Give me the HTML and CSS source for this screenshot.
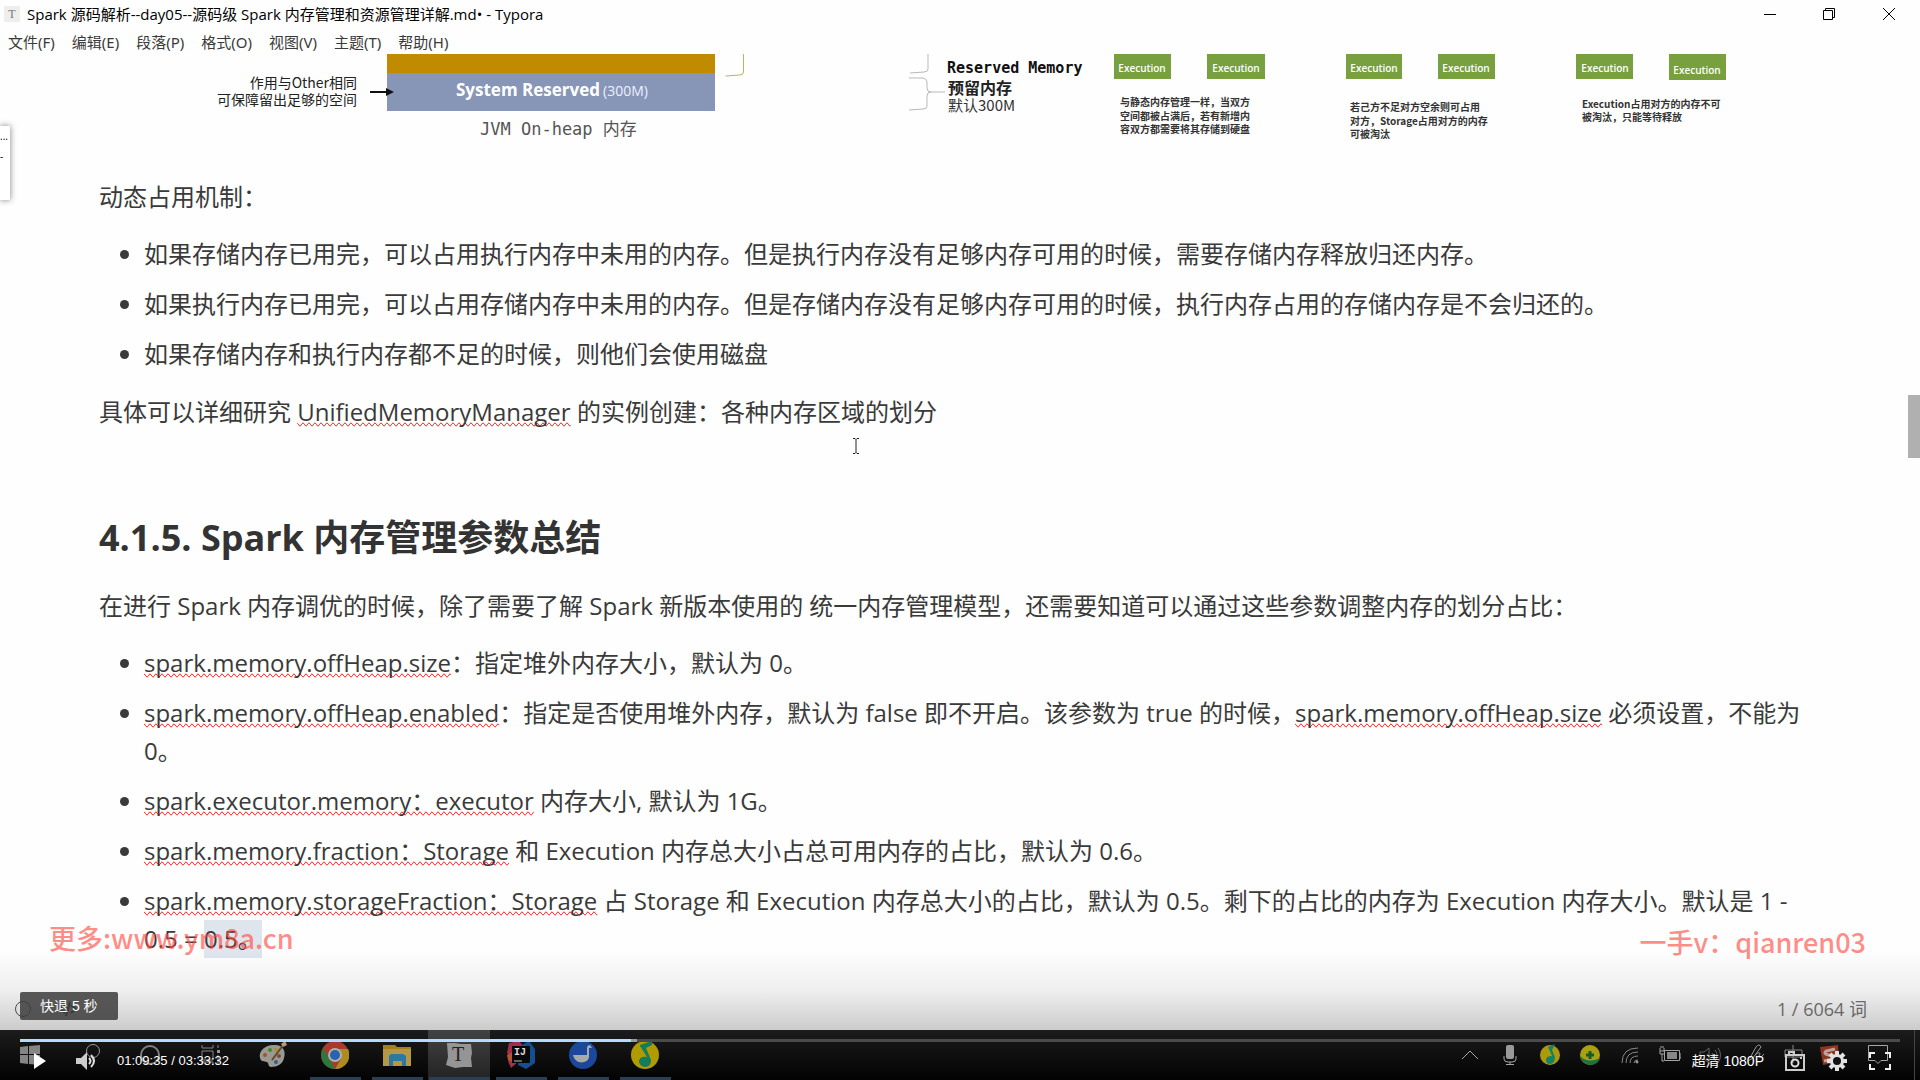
FILE: index.html
```html
<!DOCTYPE html>
<html lang="zh-CN">
<head>
  <meta charset="UTF-8">
  <meta name="viewport" content="width=device-width, initial-scale=1.0">
  <title>Spark 源码解析 - Typora</title>
  <link rel="stylesheet" href="styles.css">
</head>
<body>

  <!-- Title bar -->
  <div class="titlebar">
    <span class="app-icon">T</span>
    <span class="title">Spark 源码解析--day05--源码级 Spark 内存管理和资源管理详解.md• - Typora</span>
    <div class="window-buttons">
      <button aria-label="最小化"><svg width="12" height="12" viewBox="0 0 12 12"><path d="M0 6.5h12"/></svg></button>
      <button aria-label="还原"><svg width="12" height="12" viewBox="0 0 12 12"><path d="M.5 2.5h9v9h-9zM2.500 2.500v-2h9v9h-2"/></svg></button>
      <button aria-label="关闭"><svg width="12" height="12" viewBox="0 0 12 12"><path d="M0 0l12 12M12 0L0 12"/></svg></button>
    </div>
  </div>

  <!-- Menu -->
  <div class="menubar">
    <button>文件(F)</button>
    <button>编辑(E)</button>
    <button>段落(P)</button>
    <button>格式(O)</button>
    <button>视图(V)</button>
    <button>主题(T)</button>
    <button>帮助(H)</button>
  </div>

  <!-- Document -->
  <div class="content">
    <svg class="diagram" viewBox="99 54 1722 96">
      <text class="note" x="357" y="88" text-anchor="end">作用与Other相同</text>
      <text class="note" x="357" y="105" text-anchor="end">可保障留出足够的空间</text>
      <rect x="387" y="54" width="328" height="19" fill="#c18b00"/>
      <rect x="387" y="73" width="328" height="38" fill="#8796b7"/>
      <path d="M370 92h20" stroke="#111" stroke-width="2"/>
      <path d="M386 88l8 4-8 4z" fill="#111"/>
      <text class="reserved" x="456" y="96">System Reserved</text>
      <text class="size" x="603" y="96">(300M)</text>
      <text class="mono" x="480" y="135">JVM On-heap 内存</text>

      <path class="bracket gold" d="M743.500 54v18q0 3-4 3l-14 1"/>
      <path class="bracket" d="M928 54v15q0 3-4 3l-14 1"/>
      <path class="bracket" d="M909 78h14q4 1 4 4v6q0 4 4 4h14M931 92q-4 0-4 4v10q0 3-4 3l-14 1"/>
      <text class="mono-bold" x="947" y="73">Reserved Memory</text>
      <text class="label-bold" x="948" y="94">预留内存</text>
      <text class="label" x="948" y="111">默认300M</text>

      <g fill="#78a03f">
        <rect x="1114" y="54" width="57" height="25"/>
        <rect x="1207" y="54" width="58" height="25"/>
        <rect x="1346" y="54" width="56" height="25"/>
        <rect x="1438" y="54" width="57" height="25"/>
        <rect x="1576" y="54" width="57" height="25"/>
        <rect x="1669" y="54" width="57" height="26"/>
      </g>
      <g class="exec">
        <text x="1142" y="72">Execution</text>
        <text x="1236" y="72">Execution</text>
        <text x="1374" y="72">Execution</text>
        <text x="1466" y="72">Execution</text>
        <text x="1605" y="72">Execution</text>
        <text x="1697" y="74">Execution</text>
      </g>
      <g class="tiny">
        <text x="1120" y="106">与静态内存管理一样，当双方</text>
        <text x="1120" y="120">空间都被占满后，若有新增内</text>
        <text x="1120" y="133">容双方都需要将其存储到硬盘</text>
        <text x="1350" y="111">若己方不足对方空余则可占用</text>
        <text x="1350" y="125">对方，Storage占用对方的内存</text>
        <text x="1350" y="138">可被淘汰</text>
        <text x="1582" y="108">Execution占用对方的内存不可</text>
        <text x="1582" y="121">被淘汰，只能等待释放</text>
      </g>
    </svg>

    <p>动态占用机制：</p>
    <ul>
      <li>如果存储内存已用完，可以占用执行内存中未用的内存。但是执行内存没有足够内存可用的时候，需要存储内存释放归还内存。</li>
      <li>如果执行内存已用完，可以占用存储内存中未用的内存。但是存储内存没有足够内存可用的时候，执行内存占用的存储内存是不会归还的。</li>
      <li>如果存储内存和执行内存都不足的时候，则他们会使用磁盘</li>
    </ul>
    <p>具体可以详细研究 <span class="typo">UnifiedMemoryManager</span> 的实例创建：各种内存区域的划分</p>

    <h4>4.1.5. Spark 内存管理参数总结</h4>
    <p>在进行 Spark 内存调优的时候，除了需要了解 Spark 新版本使用的 统一内存管理模型，还需要知道可以通过这些参数调整内存的划分占比：</p>
    <ul>
      <li><span class="typo">spark.memory.offHeap.size</span>：指定堆外内存大小，默认为 0。</li>
      <li><span class="typo">spark.memory.offHeap.enabled</span>：指定是否使用堆外内存，默认为 false 即不开启。该参数为 true 的时候，<span class="typo">spark.memory.offHeap.size</span> 必须设置，不能为 0。</li>
      <li><span class="typo">spark.executor.memory：executor</span> 内存大小, 默认为 1G。</li>
      <li><span class="typo">spark.memory.fraction：Storage</span> 和 Execution 内存总大小占总可用内存的占比，默认为 0.6。</li>
      <li><span class="typo">spark.memory.storageFraction：Storage</span> 占 Storage 和 Execution 内存总大小的占比，默认为 0.5。剩下的占比的内存为 Execution 内存大小。默认是 1 - 0.5 = <span class="selected">0.5。</span></li>
    </ul>
  </div>

  <div class="side-panel"><span>...</span><span>-</span></div>
  <div class="scroll-thumb"></div>
  <svg class="text-cursor" width="8" height="16" viewBox="0 0 8 16"><path d="M1 .5h2l1 1 1-1h2M4 1.500v13M1 15.500h2l1-1 1 1h2" fill="none" stroke="#222"/></svg>
  <div class="word-count">1 / 6064 词</div>
  <svg class="outline-toggle" width="66" height="18" viewBox="0 0 66 18"><path d="M51 5l-5 4 5 4M57 5l5 4-5 4M56 2l-4 14" fill="none" stroke="#333" stroke-width="2"/><circle cx="9" cy="9" r="7.500" fill="none" stroke="#555"/></svg>

  <!-- Watermarks -->
  <div class="watermark left">更多:www.ym8a.cn</div>
  <div class="watermark right">一手v：qianren03</div>

  <!-- Windows taskbar -->
  <div class="taskbar">
    <button class="start" aria-label="开始"><svg width="20" height="20" viewBox="0 0 20 20"><path d="M0 2l8-1v8H0zM9 1l11-1v9H9zM0 10h8v9l-8-1zM9 10h11v10L9 19z" fill="#858585"/></svg></button>
    <button class="slot" aria-label="搜索"><svg width="24" height="24" viewBox="0 0 24 24"><path d="M9 14L3 20" stroke="#666"/><circle cx="15" cy="8" r="6.500" fill="none" stroke="#999"/></svg></button>
    <button class="slot" aria-label="Cortana"><svg width="24" height="24" viewBox="0 0 24 24"><circle cx="12" cy="12" r="9" fill="none" stroke="#808080" stroke-width="2"/></svg></button>
    <button class="slot view" aria-label="任务视图"><svg width="24" height="24" viewBox="0 0 24 24"><path d="M3 2v3h11V2M3 8h11v9H3zM3 22v-3h11v3M19 2v3M19 12v9" fill="none" stroke="#888"/><path d="M18 7h3v3h-3z" fill="#999"/></svg></button>

    <button class="task" aria-label="画图"><svg width="30" height="28" viewBox="0 0 30 28"><path d="M2 17C0 9 9 3 17 4c8 0 11 6 9 13-1 6-7 9-13 9-3 0-2-4-4-5-3-1-6 0-7-4z" fill="#9a9a94"/><circle cx="7" cy="14" r="2" fill="#a8502e"/><circle cx="12" cy="9" r="2" fill="#4b822e"/><circle cx="18" cy="9" r="2" fill="#a89529"/><circle cx="21" cy="15" r="2" fill="#7b4a3a"/><circle cx="18" cy="21" r="2" fill="#315f92"/><path d="M14 19L26 3" stroke="#68472d" stroke-width="2"/><path d="M23 3l4-3 2 4-4 2z" fill="#b39b7c"/></svg></button>
    <button class="task open" aria-label="Chrome"><svg width="28" height="28" viewBox="0 0 28 28"><circle cx="14" cy="14" r="14" fill="#a83b2d"/><path d="M2 7l8 14 4 7A14 14 0 0 1 2 7z" fill="#2b793c"/><path d="M14 8h13a14 14 0 0 1-13 20l6-10z" fill="#ad8b20"/><circle cx="14" cy="14" r="7" fill="#b1b1ab"/><circle cx="14" cy="14" r="5" fill="#2862b2"/></svg></button>
    <button class="task open" aria-label="文件资源管理器"><svg width="28" height="28" viewBox="0 0 28 28"><path d="M0 4h12l2 2h14v19H0z" fill="#a5811e"/><path d="M0 8h28v17H0z" fill="#b59748"/><path d="M6 25V15l2-2h12l3 2v10h-4v-5H10v5z" fill="#2c78a0"/></svg></button>
    <button class="task open active" aria-label="Typora"><svg width="28" height="28" viewBox="0 0 28 28"><path d="M2 2l8 0 6 1 10 0 1 9-1 5 1 9-9 0-8 1-9-3 2-8z" fill="#959595"/><text x="13" y="20" text-anchor="middle">T</text></svg></button>
    <button class="task open" aria-label="IntelliJ IDEA"><svg width="28" height="28" viewBox="0 0 28 28"><path d="M2 2l10-2 5 6-5 14-8 7-3-7 2-4-3-4z" fill="#a22f50"/><path d="M0 14l6-3v10l-5-2z" fill="#ad5929"/><path d="M15 4l7-4 6 8v14l-9 6-8-4z" fill="#164f91"/><path d="M5 5h18v17H5z" fill="#080808"/><path d="M7 20h8" stroke="#bbb"/><text class="idea" x="7" y="14">IJ</text></svg></button>
    <button class="task open" aria-label="音乐"><svg width="30" height="28" viewBox="0 0 30 28"><circle cx="15" cy="14" r="14" fill="#1b489b"/><path d="M5 14h14V7q0-3 3-3l2 3h-3v9c-1 7-14 8-16-2z" fill="#a7aaa8"/></svg></button>
    <button class="task open" aria-label="QQ音乐"><svg width="30" height="28" viewBox="0 0 30 28"><circle cx="15" cy="14" r="14" fill="#b19b03"/><path d="M10 4l12-4v4l-6 3 5 12q0 7-6 7-6-1-6-6 1-5 8-4L10 5z" fill="#147b5b"/></svg></button>

    <div class="tray">
      <svg viewBox="0 0 24 24"><path d="M4 16l8-8 8 8"/></svg>
      <svg viewBox="0 0 24 24"><rect x="8" y="2" width="8" height="14" rx="2" fill="#999" stroke="none"/><path d="M6 13v3q0 3 4 3h4q4 0 4-3v-3M12 19v3M8 21.500h8"/></svg>
      <svg viewBox="0 0 24 24"><circle cx="12" cy="12" r="10" fill="#ad9a0c" stroke="none"/><path d="M10 4l7-3-3 6 3 7q0 7-5 7-4 0-4-4t6-4z" fill="#168163" stroke="none"/></svg>
      <svg viewBox="0 0 24 24"><circle cx="12" cy="12" r="10" fill="#aaa011" stroke="none"/><path d="M2 13q8 8 20 2-2 7-10 7-8-1-10-9z" fill="#1c743d" stroke="none"/><path d="M12 8v8M8 12h8" stroke="#155b32" stroke-width="3"/></svg>
      <svg viewBox="0 0 24 24"><path d="M4 20Q4 5 20 5M8 20Q8 9 20 9M12 20Q12 13 20 13M16 20q0-3 4-3" stroke="#888"/><circle cx="19" cy="19" r="1" fill="#999"/></svg>
      <svg viewBox="0 0 24 24"><path d="M6.500 7.500h15v10h-15zM22 10v5h1M2 5v3h4V5M2 8v3h4M4 11v7h2M3 5V3M5 5V3"/><path d="M9 9h10v7H9z" fill="#888" stroke="none"/></svg>
      <svg viewBox="0 0 24 24"><path d="M2 9h4l5-4v15l-5-4H2zM14 10q2 2 0 5M17 7q4 5 0 11M20 5q5 7 0 15" stroke="#666"/></svg>
      <svg viewBox="0 0 24 24"><path d="M12 15l6-11q3-4 5 0l-8 11-5 3M17 12q5-4 5-1-3 5 1 3l3-3" stroke="#999"/></svg>
      <svg viewBox="0 0 24 24"><path d="M7 7h17v7H7zM15 2v18" stroke="#888"/></svg>
      <svg viewBox="0 0 24 24"><path d="M2 4l18-2 1 17-16 3z" fill="#8d351f" stroke="none"/><path d="M17 6L8 8q-3 3 3 4 8 1 4 4l-9 2" stroke="#b8a49b" stroke-width="3"/></svg>
      <svg class="notice" viewBox="0 0 24 24"><path d="M2.500 2.500h19v15H15l-3 3-3-3H2.500z"/></svg>
    </div>
  </div>

  <!-- Video player controls -->
  <div class="player">
    <div class="toast">快退 5 秒</div>
    <input class="progress" type="range" min="0" max="12812" value="4175" aria-label="播放进度" style="--played: 32.6%">
    <div class="controls">
      <button class="play" aria-label="播放"><svg width="12" height="16" viewBox="0 0 12 16"><path d="M0 0l12 8-12 8z" fill="#fff"/></svg></button>
      <button class="volume" aria-label="音量"><svg width="22" height="18" viewBox="0 0 22 18"><path d="M0 6h5l6-6v18l-6-6H0z" fill="#ccc"/><path d="M13 6q3 3 0 6M15 3q6 6 0 12" fill="none" stroke="#ddd" stroke-width="2"/></svg></button>
      <span class="time">01:09:35 / 03:33:32</span>
      <button class="quality">超清 1080P</button>
      <button class="camera" aria-label="截图"><svg width="20" height="20" viewBox="0 0 20 20"><path d="M4 4V1h5v3M1 4h18v15H1zM15 7h2" fill="none" stroke="#ccc" stroke-width="2"/><circle cx="10" cy="12" r="3.500" fill="none" stroke="#ddd" stroke-width="2"/></svg></button>
      <button class="settings" aria-label="设置"><svg width="20" height="20" viewBox="0 0 20 20"><g stroke="#e2e2e2" stroke-width="4"><path d="M10 0v4M10 16v4M0 10h4M16 10h4M3 3l3 3M14 14l3 3M17 3l-3 3M3 17l3-3"/></g><circle cx="10" cy="10" r="5.500" fill="#111" stroke="#e2e2e2" stroke-width="3"/></svg></button>
      <button class="fullscreen" aria-label="全屏"><svg width="22" height="18" viewBox="0 0 22 18"><path d="M1 6V1h5M16 1h5v5M21 12v5h-5M6 17H1v-5" fill="none" stroke="#eee" stroke-width="2"/></svg></button>
    </div>
  </div>

</body>
</html>
```

FILE: styles.css
```css
/* Basic styling */
* {
  box-sizing: border-box;
}
body, html {
  margin: 0;
  padding: 0;
  height: 100%;
  overflow: hidden;
  background-color: #fefefe;
  color: #3a3a3a;
  font-family: "Open Sans", "Noto Sans CJK SC", sans-serif;
}
button {
  border: none;
  padding: 0;
  background: none;
  color: inherit;
  font: inherit;
  cursor: pointer;
}
svg {
  display: block;
}

/* Title bar */
.titlebar {
  display: flex;
  align-items: center;
  height: 28px;
  padding-left: 4px;
  color: #000;
  font-size: 15px;
  font-family: "Open Sans", "Noto Sans CJK SC", sans-serif;
}
.title {
  padding-bottom: 2px;
}
.app-icon {
  width: 16px;
  margin-right: 7px;
  background-color: #eee;
  color: #777;
  font: 12px/16px "Liberation Serif", serif;
  text-align: center;
}
.window-buttons {
  display: flex;
  margin-left: auto;
}
.window-buttons button {
  display: grid;
  place-items: center;
  width: 59px;
  height: 28px;
}
.window-buttons button:last-child {
  width: 62px;
}
.window-buttons path {
  fill: none;
  stroke: #000;
}

/* Menu */
.menubar {
  display: flex;
  gap: 17px;
  height: 26px;
  padding-left: 8px;
  font-family: "Noto Sans", "Noto Sans CJK SC", sans-serif;
  font-size: 15px;
  line-height: 28px;
}

/* Document */
.content {
  padding: 0 99px;
  font-size: 24px;
  line-height: 38px;
}
.content p {
  margin: 20px 0 19px;
}
.content ul {
  margin: 19px 0 20px;
  padding-left: 45px;
}
.content li + li {
  margin-top: 12px;
}
.content h4 {
  margin: 85px 0 27px;
  color: #333;
  font-size: 36px;
  line-height: 44px;
}
.content .diagram {
  width: 100%;
  margin-bottom: 28px;
}
.typo {
  text-decoration: underline wavy #d8232f 1px;
  text-decoration-line: spelling-error;
  text-underline-offset: 2px;
  text-decoration-skip-ink: none;
}
.selected {
  display: inline-block;
  background-color: #dfe5ec;
}

/* Diagram text */
.note {
  font-family: "Noto Sans CJK SC", sans-serif;
  font-size: 14px;
  fill: #222;
}
.reserved {
  font-size: 17px;
  font-weight: bold;
  fill: #fff;
}
.size {
  font-size: 14px;
  fill: #eef;
}
.mono {
  font-family: "DejaVu Sans Mono", "Noto Sans CJK SC", monospace;
  font-size: 17px;
  fill: #555;
}
.mono-bold {
  font-family: "DejaVu Sans Mono", monospace;
  font-size: 15px;
  font-weight: bold;
  fill: #111;
}
.label-bold {
  font-size: 16px;
  font-weight: bold;
  fill: #222;
}
.label {
  font-family: "Noto Sans CJK SC", sans-serif;
  font-size: 15px;
  fill: #333;
}
.exec text {
  font-size: 10px;
  font-weight: 600;
  fill: #fff;
  text-anchor: middle;
}
.tiny text {
  font-family: "Noto Sans CJK SC", sans-serif;
  font-size: 10px;
  font-weight: bold;
  fill: #333;
}
.bracket {
  fill: none;
  stroke: #b5b9bd;
}
.bracket.gold {
  stroke: #b9b36a;
}

/* Things floating over the document */
.side-panel {
  position: absolute;
  top: 126px;
  left: 0;
  display: flex;
  flex-direction: column;
  width: 10px;
  height: 74px;
  background-color: #fff;
  box-shadow: 0 0 6px rgba(0, 0, 0, 0.5);
  color: #000;
  font-size: 10px;
  line-height: 20px;
}
.scroll-thumb {
  position: absolute;
  top: 395px;
  right: 0;
  width: 12px;
  height: 63px;
  background-color: #b0b0b0;
}
.text-cursor {
  position: absolute;
  top: 438px;
  left: 852px;
}
.word-count {
  position: absolute;
  right: 53px;
  bottom: 58px;
  color: #777;
  font-size: 18px;
  line-height: 26px;
}
.outline-toggle {
  position: absolute;
  left: 14px;
  bottom: 62px;
}
.watermark {
  position: absolute;
  color: rgba(255, 74, 64, 0.65);
  font-family: "Noto Sans CJK SC", sans-serif;
  font-size: 27px;
  font-weight: 500;
  line-height: 38px;
}
.watermark.left {
  left: 49px;
  bottom: 123px;
}
.watermark.right {
  right: 54px;
  bottom: 119px;
}

/* Taskbar */
.taskbar {
  position: absolute;
  left: 0;
  right: 0;
  bottom: 0;
  display: flex;
  height: 50px;
  background: linear-gradient(#1c1c1d, #030303);
}
.taskbar button {
  display: grid;
  place-items: center;
}
.taskbar .start,
.taskbar .slot {
  width: 60px;
}
.taskbar .view {
  width: 62px;
}
.taskbar .task {
  width: 62px;
}
.taskbar .open {
  background: linear-gradient(#2c3f52, #2c3f52) bottom / 51px 3px no-repeat;
}
.taskbar .active {
  background: linear-gradient(#2c3f52, #2c3f52) bottom / 61px 3px no-repeat, linear-gradient(#424242, #232323);
}
.task text {
  font: 20px "Liberation Serif", serif;
  fill: #222;
}
.task .idea {
  font: bold 10px "Liberation Mono", monospace;
  fill: #ddd;
}
.tray {
  display: flex;
  align-items: center;
  gap: 16px;
  margin-left: auto;
  margin-right: 5px;
  padding-right: 24px;
  border-right: 1px solid #444;
}
.tray svg {
  width: 24px;
  height: 24px;
  overflow: visible;
  fill: none;
  stroke: #a5a5a5;
}
.tray .notice {
  margin-left: 8px;
}

/* Player */
.player {
  position: absolute;
  left: 0;
  right: 0;
  bottom: 0;
  display: flex;
  flex-direction: column;
  align-items: flex-start;
  height: 130px;
  padding: 42px 20px 0;
  background: linear-gradient(transparent, rgba(0, 0, 0, 0.06) 50%, rgba(0, 0, 0, 0.2)) top / 100% 80px no-repeat;
}
.toast {
  height: 28px;
  padding: 0 20px;
  border-radius: 2px;
  background-color: rgba(60, 60, 60, 0.85);
  color: #fff;
  font: 14px/28px "Liberation Sans", "Noto Sans CJK SC", sans-serif;
}
.progress {
  appearance: none;
  width: 100%;
  height: 3px;
  margin: 19px 0 0;
  background: linear-gradient(to right, #b5daff var(--played), #4b4b4b var(--played));
}
.progress::-webkit-slider-thumb {
  appearance: none;
  width: 6px;
  height: 3px;
  background-color: #999;
}
.controls {
  display: flex;
  align-items: center;
  width: 100%;
  height: 38px;
  padding: 0 9px 0 14px;
  color: #fff;
  font: 14px/20px "Liberation Sans", "Noto Sans CJK SC", sans-serif;
}
.play {
  margin-right: 30px;
}
.volume {
  margin-right: 19px;
}
.time {
  font-size: 13px;
}
.quality {
  margin-left: auto;
}
.camera {
  margin-left: 21px;
}
.settings {
  margin: 0 22px;
}
```
